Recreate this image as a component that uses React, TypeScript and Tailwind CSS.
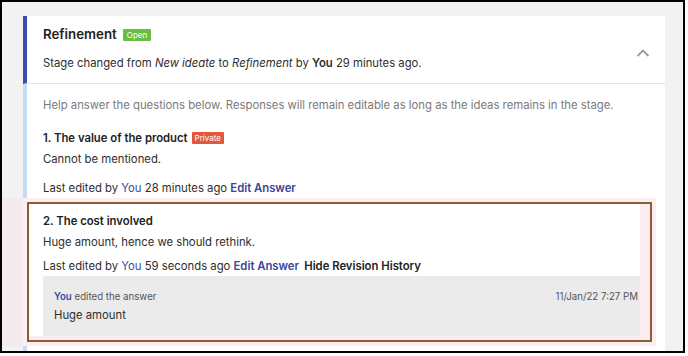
import React from "react";

export default function App() {
  return (
    <div
      className="relative w-[688px] h-[356px] bg-white overflow-hidden"
      style={{ fontFamily: "Inter, 'Noto Sans', sans-serif" }}
    >
      <div className="w-[685px] h-[353px] border-2 border-black bg-[#f2f2f2] overflow-hidden pl-[21px] pt-[14px]">
        <div className="w-[642px] bg-white">
          {/* Header */}
          <div className="border-l-4 border-[#3d4bb3] border-b border-b-[#e4e4e4] pl-4 pr-[15px] pt-[9px] pb-[11px] flex items-center">
            <div className="flex-1">
              <div className="flex items-center h-[20px]">
                <span className="text-[13.3px] font-semibold text-[#222]">Refinement</span>
                <span className="ml-[6px] bg-[#68bd45] text-white text-[8px] leading-[12px] h-[12px] px-[4px] rounded-[1px]">
                  Open
                </span>
              </div>
              <div className="mt-[9px] text-[11.3px] leading-[18px] text-[#2e2e2e]">
                Stage changed from <i>New ideate</i> to <i>Refinement</i> by{" "}
                <b className="font-semibold">You</b> 29 minutes ago.
              </div>
            </div>
            <svg width="14" height="10" viewBox="0 0 14 10" className="mt-[8px]">
              <path d="M1.5 8 L7 2.5 L12.5 8" fill="none" stroke="#9a9a9a" strokeWidth="1.8" />
            </svg>
          </div>
          {/* Body */}
          <div className="border-l-4 border-[#c6dbf7] pt-[12px] pb-[20px]">
            <div className="pl-4 text-[11.3px] leading-[18px] text-[#7a7a7a]">
              Help answer the questions below. Responses will remain editable as long as the ideas remains in the stage.
            </div>
            <div className="pl-4 mt-[15px] flex items-center h-[18px]">
              <span className="text-[11.3px] font-semibold text-[#222]">1. The value of the product</span>
              <span className="ml-[4px] bg-[#e2583a] text-white text-[8px] leading-[12px] h-[12px] px-[3px] rounded-[1px]">
                Private
              </span>
            </div>
            <div className="pl-4 mt-[3px] text-[11.3px] leading-[18px] text-[#2e2e2e]">Cannot be mentioned.</div>
            <div className="pl-4 mt-[11px] text-[11.3px] leading-[18px] text-[#2e2e2e]">
              Last edited by <span className="text-[#3d4aa6]">You</span> 28 minutes ago{" "}
              <span className="font-semibold text-[#3a4598]">Edit Answer</span>
            </div>
            {/* Highlighted box */}
            <div className="relative z-10 mt-[5px] w-[625px] border-2 border-[#8b5d33] bg-[#fdedf1] shadow-[0_0_0_4px_#fdeef2] pb-[4px]">
              <div className="bg-white mr-[10px] pl-[14px] pt-[8px]">
                <div className="text-[11.3px] leading-[18px] font-semibold text-[#222]">2. The cost involved</div>
                <div className="mt-[3px] text-[11.3px] leading-[18px] text-[#2e2e2e]">
                  Huge amount, hence we should rethink.
                </div>
                <div className="mt-[6px] text-[11.3px] leading-[18px] text-[#2e2e2e]">
                  Last edited by <span className="text-[#3d4aa6]">You</span> 59 seconds ago{" "}
                  <span className="font-semibold text-[#3a4598]">Edit Answer</span>{" "}
                  <span className="ml-[2px] font-semibold text-[#222]">Hide Revision History</span>
                </div>
                <div className="mt-[1px] bg-[#ebebeb] pl-[11px] pr-[2px] pt-[13px] pb-[12px]">
                  <div className="flex justify-between text-[9.7px] leading-[16px] text-[#555]">
                    <span>
                      <span className="font-semibold text-[#3d4aa6]">You</span> edited the answer
                    </span>
                    <span>11/Jan/22 7:27 PM</span>
                  </div>
                  <div className="mt-[1px] text-[11.3px] leading-[18px] text-[#2e2e2e]">Huge amount</div>
                </div>
              </div>
            </div>
          </div>
        </div>
      </div>
      {/* pink highlight glow on the left */}
      <div className="absolute left-[2px] top-[198px] w-[25px] h-[148px] bg-[rgba(255,170,200,0.1)]" />
    </div>
  );
}
